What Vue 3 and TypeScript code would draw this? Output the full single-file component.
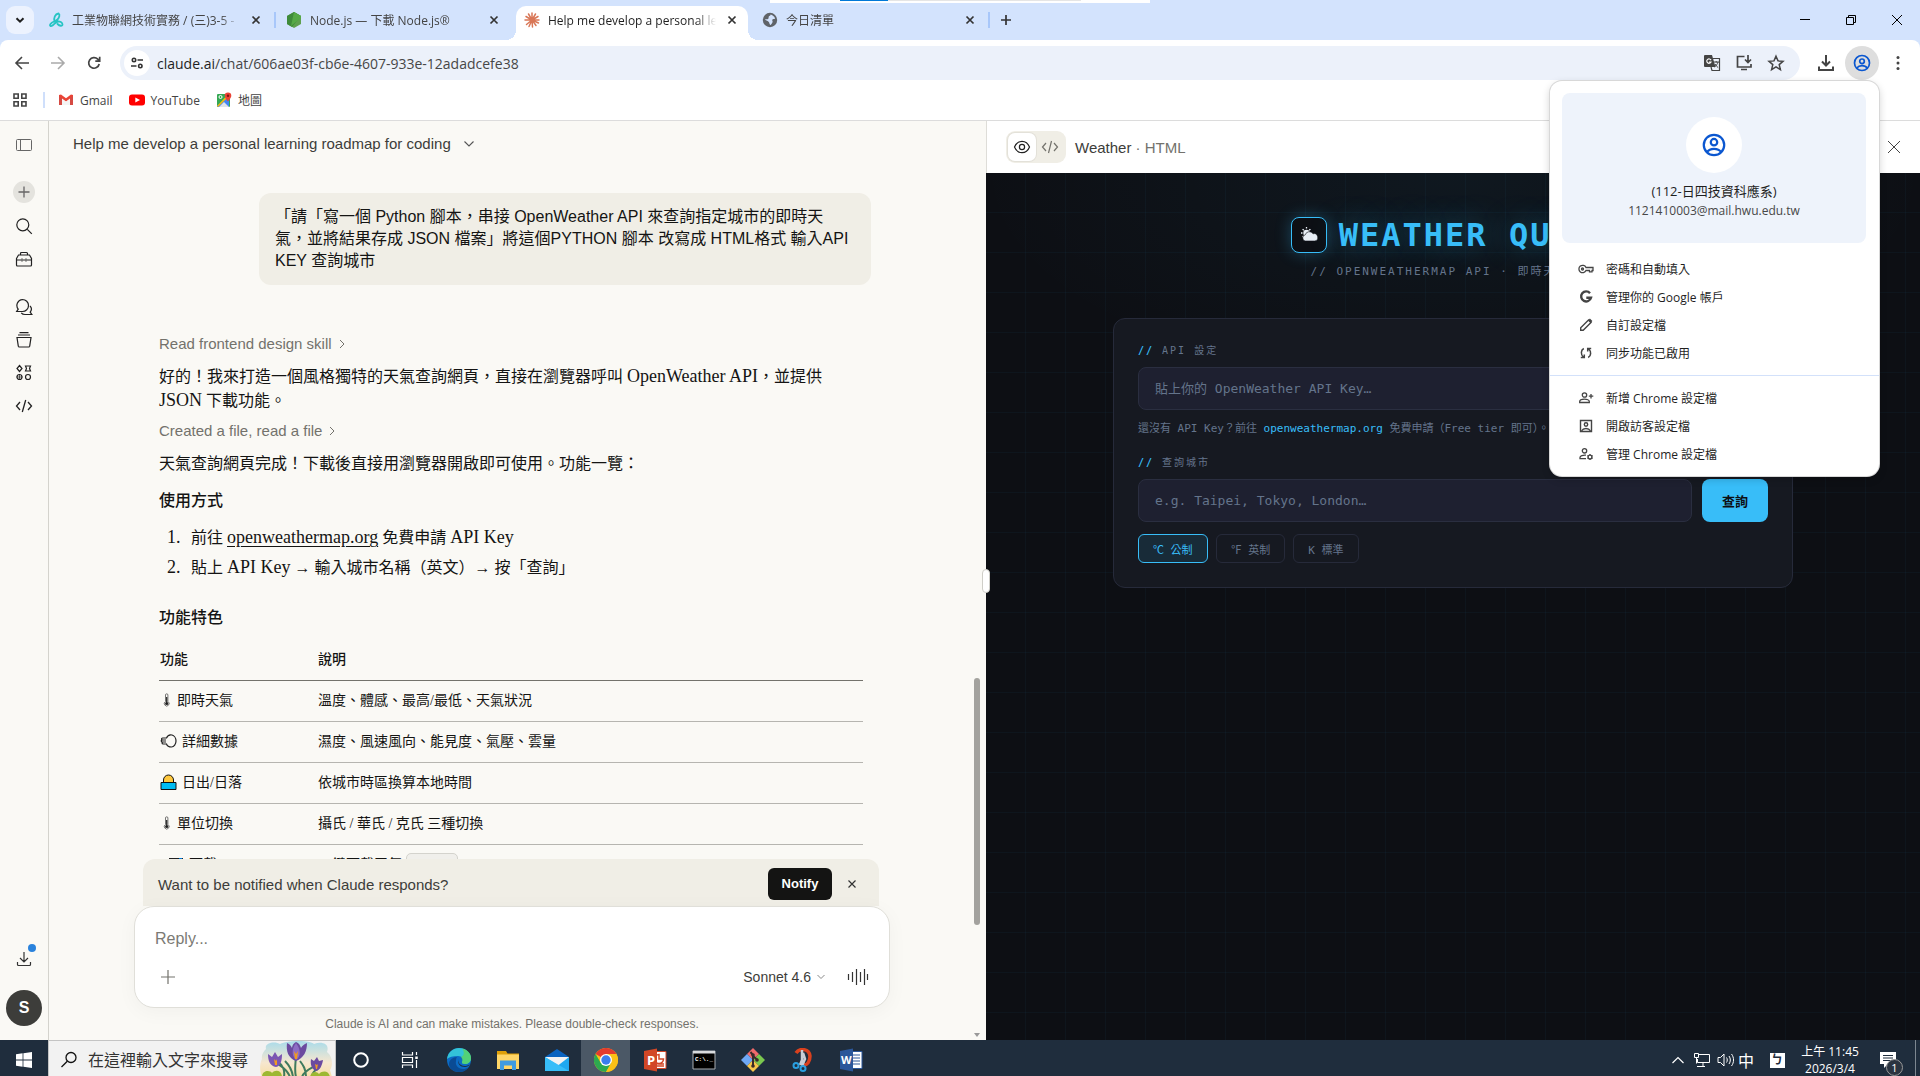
<script setup lang="ts">
import { ref } from 'vue'

interface Tab { title: string; icon: string; active?: boolean; sep?: boolean }
const tabs: Tab[] = [
  { title: '工業物聯網技術實務 / (三)3-5 -', icon: 'course', sep: true },
  { title: 'Node.js — 下載 Node.js®', icon: 'node' },
  { title: 'Help me develop a personal le', icon: 'claude', active: true },
  { title: '今日清單', icon: 'globe', sep: true },
]

interface Row { icon: string; name: string; desc: string; code?: string }
const rows: Row[] = [
  { icon: 'thermo', name: '即時天氣', desc: '溫度、體感、最高/最低、天氣狀況' },
  { icon: 'wind', name: '詳細數據', desc: '濕度、風速風向、能見度、氣壓、雲量' },
  { icon: 'sunrise', name: '日出/日落', desc: '依城市時區換算本地時間' },
  { icon: 'thermo', name: '單位切換', desc: '攝氏 / 華氏 / 克氏 三種切換' },
  { icon: 'disk', name: '下載', desc: '一鍵下載天氣', code: '.json' },
]

const profileItems = [
  { icon: 'key', label: '密碼和自動填入' },
  { icon: 'google', label: '管理你的 Google 帳戶' },
  { icon: 'pencil', label: '自訂設定檔' },
  { icon: 'sync', label: '同步功能已啟用' },
]
const chromeItems = [
  { icon: 'add', label: '新增 Chrome 設定檔' },
  { icon: 'guest', label: '開啟訪客設定檔' },
  { icon: 'manage', label: '管理 Chrome 設定檔' },
]

const units = ['℃ 公制', '℉ 英制', 'K 標準']
const unit = ref(0)
const apiKey = ref('')
const city = ref('')
const reply = ref('')
</script>

<template>
  <div class="screen">
    <header class="browser">
      <div class="tabstrip">
        <button class="tab-search" aria-label="搜尋分頁">
          <svg width="12" height="12" viewBox="0 0 12 12"><path d="M2.500 4.200 6 7.700l3.500-3.500" fill="none" stroke="#1f1f1f" stroke-width="2" /></svg>
        </button>
        <div class="tabs">
          <div v-for="t in tabs" :key="t.title" class="tab" :class="{ active: t.active, sep: t.sep }">
            <svg v-if="t.icon === 'course'" width="16" height="16" viewBox="0 0 16 16" fill="none" stroke="#26c4c4" stroke-width="1.800" stroke-linecap="round"><path d="M10.500 1.500C7 2 5.500 6 6.500 9.500M10.500 1.500c2 1 .5 4.500-1 6S4 10 2.500 12s.500 2.500 2 1.500 3-3.500 5.500-4M9 9.500c3-.5 5.500 1 5.500 3s-3 1.500-5-.5" /></svg>
            <svg v-else-if="t.icon === 'node'" width="16" height="16" viewBox="0 0 16 16"><path d="M8 0l7 4v8l-7 4-7-4V4z" fill="#5fa04e" /><path d="M8 0l7 4-9 11-5-3V4z" fill="#3f8b3a" /><path d="M8 0l7 4v2L5 14z" fill="#56a946" /></svg>
            <svg v-else-if="t.icon === 'claude'" width="16" height="16" viewBox="0 0 16 16" stroke="#d97757" stroke-width="1.500" stroke-linecap="round"><path d="M8 8V1M8 8l3.500-6M8 8l6-3.500M8 8h7M8 8l6.500 3M8 8l4 5.500M8 8l.5 7M8 8l-3 6.500M8 8l-5.500 4.500M8 8H1M8 8 2 4.500M8 8 4.500 2" /></svg>
            <svg v-else width="16" height="16" viewBox="0 0 16 16"><circle cx="8" cy="8" r="7.200" fill="#5f6368" /><path d="M8.500 2.500c2 .5 4 2 4.600 4-1 .8-2.300.3-2.800 1.300s1 1.600 0 2.900c-.7.9-1 2-2 2.300-1-.8-.7-2.200-1.700-3.200S3.300 8.600 3 7.300c1.200 0 2.600.3 3.300-.6s-.1-1.900 1-2.600c.7-.4 1.400-.7 1.200-1.600z" fill="#d3e3fd" /></svg>
            <span class="tab-title">{{ t.title }}</span>
            <button class="tab-close" aria-label="關閉分頁">
              <svg width="10" height="10" viewBox="0 0 10 10"><path d="M1.500 1.500l7 7m0-7l-7 7" stroke="#333" stroke-width="1.700" /></svg>
            </button>
          </div>
          <button class="new-tab" aria-label="新分頁">
            <svg width="12" height="12" viewBox="0 0 12 12"><path d="M6 1v10M1 6h10" stroke="#333" stroke-width="1.700" /></svg>
          </button>
        </div>
        <div class="window-buttons">
          <button aria-label="最小化"><svg width="10" height="10" viewBox="0 0 10 10"><path d="M0 4.500h10" stroke="#000" /></svg></button>
          <button aria-label="還原"><svg width="10" height="10" viewBox="0 0 10 10" fill="none" stroke="#000"><path d="M.5 2.500h7v7h-7zM2.500 2.500v-2h7v7h-2" /></svg></button>
          <button aria-label="關閉"><svg width="10" height="10" viewBox="0 0 10 10"><path d="M0 0l10 10M10 0L0 10" stroke="#000" /></svg></button>
        </div>
        <div class="share-bar"><i></i></div>
      </div>

      <div class="toolbar">
        <div class="nav">
          <button aria-label="上一頁"><svg width="16" height="16" viewBox="0 0 16 16" fill="none" stroke="#444" stroke-width="1.600"><path d="M15 8H2M8 2L2 8l6 6" /></svg></button>
          <button aria-label="下一頁"><svg width="16" height="16" viewBox="0 0 16 16" fill="none" stroke="#aaa" stroke-width="1.600"><path d="M1 8h13M8 2l6 6-6 6" /></svg></button>
          <button aria-label="重新載入"><svg width="16" height="16" viewBox="0 0 16 16" fill="none" stroke="#444" stroke-width="1.700"><path d="M13.200 9a5.300 5.300 0 1 1-1.400-4.800L13.500 6M13.700 1.800v4.400H9.300" /></svg></button>
        </div>
        <div class="omnibox">
          <button class="site-info" aria-label="網站資訊">
            <svg width="14" height="14" viewBox="0 0 14 14" fill="none" stroke="#333" stroke-width="1.600"><circle cx="4" cy="4" r="1.700" /><path d="M7.500 4H13M1 10h5.500" /><circle cx="10.300" cy="10" r="1.700" /></svg>
          </button>
          <span class="url"><b>claude.ai</b>/chat/606ae03f-cb6e-4607-933e-12adadcefe38</span>
          <div class="omni-icons">
            <button aria-label="翻譯"><svg width="18" height="18" viewBox="0 0 18 18"><path d="M2 1h7l3.500 12H2a1 1 0 0 1-1-1V2a1 1 0 0 1 1-1z" fill="#444" /><path d="M8 6.200A2.200 2.200 0 1 0 8 8H6" fill="none" stroke="#fff" stroke-width="1.200" /><path d="M10 4.500h6.500v12H9L8 13" fill="none" stroke="#444" stroke-width="1.200" /><path d="M10.500 8H16M13.200 7v1.500M15 8c-.5 2-2 4-3.500 5M12 10c.8 1.500 2 2.800 3.200 3.600" fill="none" stroke="#444" /></svg></button>
            <button aria-label="安裝"><svg width="18" height="18" viewBox="0 0 18 18" fill="none" stroke="#444" stroke-width="1.700"><path d="M9.500 2.500h-7v10.500h13.500V10M6 15.500h6M13 1v7M10 5.500l3 3 3-3" /></svg></button>
            <button aria-label="加入書籤"><svg width="18" height="18" viewBox="0 0 18 18" fill="none" stroke="#444" stroke-width="1.500"><path d="M9 2.200l2 4.700 5 .4-3.800 3.300 1.200 5L9 12.900l-4.400 2.700 1.200-5L2 7.300l5-.4z" /></svg></button>
          </div>
        </div>
        <div class="actions">
          <button aria-label="下載"><svg width="18" height="18" viewBox="0 0 18 18" fill="none" stroke="#444" stroke-width="2"><path d="M9 1v10M5 7.500l4 4 4-4M2 12.500V16h14v-3.500" /></svg></button>
          <button class="profile" aria-label="個人資料"><svg width="20" height="20" viewBox="0 0 20 20" fill="none" stroke="#0b57d0" stroke-width="1.700"><circle cx="10" cy="10" r="7.500" /><circle cx="10" cy="8.300" r="2.300" /><path d="M4.800 15c1.300-1.700 3-2.400 5.200-2.400s4 .7 5.200 2.400" /></svg></button>
          <button aria-label="更多"><svg width="4" height="16" viewBox="0 0 4 16" fill="#444"><circle cx="2" cy="2.500" r="1.500" /><circle cx="2" cy="8" r="1.500" /><circle cx="2" cy="13.500" r="1.500" /></svg></button>
        </div>
      </div>

      <nav class="bookmarks">
        <button class="apps" aria-label="應用程式"><svg width="14" height="14" viewBox="0 0 14 14" fill="none" stroke="#444" stroke-width="1.600"><path d="M1 1h4.200v4.200H1zM8.800 1H13v4.200H8.800zM1 8.800h4.200V13H1zM8.800 8.800H13V13H8.800z" /></svg></button>
        <a href="#gmail"><svg width="16" height="16" viewBox="0 0 16 16"><path d="M1 3v10h3V6.500L8 9.500l4-3V13h3V3l-2-.5L8 6.200 3 2.500z" fill="#ea4335" /><path d="M1 4v9h3V6.200z" fill="#d54a43" /><path d="M12 6.200V13h3V4z" fill="#d54a43" /><path d="M4 7v6h8V7L8 10z" fill="#f4f4f4" /></svg>Gmail</a>
        <a href="#youtube"><svg width="16" height="16" viewBox="0 0 16 16"><rect y="2.500" width="16" height="11" rx="3" fill="#f00" /><path d="M6.300 5.500v5L11 8z" fill="#fff" /></svg>YouTube</a>
        <a href="#maps"><svg width="16" height="16" viewBox="0 0 16 16"><rect x="1" y="2" width="13" height="13" rx="1" fill="#34a853" /><path d="M1 14L13 3v11a1 1 0 0 1-1 1H2z" fill="#4285f4" /><path d="M3 15l5-5 5 5z" fill="#dfe3e8" /><path d="M1 14L12 2.500l1.500 1L2 15z" fill="#fbbc04" /><circle cx="4.500" cy="5" r="1.500" fill="none" stroke="#fff" /><path d="M12 .5A3.300 3.300 0 0 0 8.700 3.800C8.700 6 12 9.500 12 9.500s3.300-3.500 3.300-5.700A3.300 3.300 0 0 0 12 .5z" fill="#ea4335" /><circle cx="12" cy="3.800" r="1.200" fill="#811411" /></svg>地圖</a>
      </nav>

      <aside class="profile-menu">
        <div class="profile-card">
          <div class="profile-pic"><svg width="28" height="28" viewBox="0 0 20 20" fill="none" stroke="#0b57d0" stroke-width="1.600"><circle cx="10" cy="10" r="7.300" /><circle cx="10" cy="8" r="2.300" /><path d="M4.800 15.200c1.300-1.700 3-2.400 5.200-2.400s4 .7 5.200 2.400" /></svg></div>
          <strong>(112-日四技資科應系)</strong>
          <span>1121410003@mail.hwu.edu.tw</span>
        </div>
        <ul>
          <li v-for="p in profileItems" :key="p.label"><button>
            <svg v-if="p.icon === 'key'" width="16" height="16" viewBox="0 0 16 16" fill="none" stroke="#444" stroke-width="1.300"><path d="M8 6.500h7v3h-1v1.300h-2.500V9.500H8A3.700 3.700 0 1 1 8 6.500z" /><circle cx="4.500" cy="8" r="1" /></svg>
            <svg v-else-if="p.icon === 'google'" width="16" height="16" viewBox="0 0 16 16" fill="none" stroke="#444" stroke-width="2.400"><path d="M12 4.200A5 5 0 1 0 13 8.700H8.300" /></svg>
            <svg v-else-if="p.icon === 'pencil'" width="16" height="16" viewBox="0 0 16 16" fill="none" stroke="#444" stroke-width="1.400"><path d="M2.700 13.300v-2.500l7.800-7.800 2.500 2.500-7.800 7.800z" /><path d="M11 2.500l2.500 2.500" stroke-width="2.500" /></svg>
            <svg v-else width="16" height="16" viewBox="0 0 16 16" fill="none" stroke="#444" stroke-width="1.500"><path d="M5.800 3.500C2.800 5 2.500 9.500 5.300 12M2.800 12.500h3.500V9.500M10.200 12.500c3-1.500 3.300-6 .5-8.500M13.200 3.500H9.700v3" /></svg>
            {{ p.label }}</button></li>
        </ul>
        <hr />
        <ul>
          <li v-for="p in chromeItems" :key="p.label"><button>
            <svg v-if="p.icon === 'add'" width="16" height="16" viewBox="0 0 16 16" fill="none" stroke="#444" stroke-width="1.300"><circle cx="6.500" cy="5" r="2.200" /><path d="M1.700 12.500v-1c0-1.500 2.500-2.400 4.800-2.400s4.800.9 4.800 2.400v1zM13 4v4.500M10.800 6.200h4.500" /></svg>
            <svg v-else-if="p.icon === 'guest'" width="16" height="16" viewBox="0 0 16 16" fill="none" stroke="#444" stroke-width="1.400"><path d="M2.500 2.500h11v11h-11z" /><circle cx="8" cy="6.500" r="1.700" /><path d="M3.500 12.800c2-3 7-3 9 0" /></svg>
            <svg v-else width="16" height="16" viewBox="0 0 16 16" fill="none" stroke="#444" stroke-width="1.300"><circle cx="6.500" cy="4.800" r="2.200" /><path d="M8 9.200c-3-.3-6 .8-6 2.300v1.200h6" /><circle cx="12" cy="11" r="1.900" /><path d="M12 8v1.200M12 12.800V14M9.400 9.500l1 .6M13.600 11.900l1 .6M9.400 12.500l1-.6M13.600 10.100l1-.6" /></svg>
            {{ p.label }}</button></li>
        </ul>
      </aside>
    </header>

    <main class="workspace">
      <nav class="rail">
        <button aria-label="側邊欄"><svg width="18" height="18" viewBox="0 0 18 18" fill="none" stroke="#666"><rect x="1.500" y="3.500" width="15" height="11" rx="1" /><path d="M5.500 3.500v11" /></svg></button>
        <button class="new-chat" aria-label="新對話"><svg width="14" height="14" viewBox="0 0 14 14"><path d="M7 1.500v11M1.500 7h11" stroke="#666" stroke-width="1.300" /></svg></button>
        <button aria-label="搜尋"><svg width="18" height="18" viewBox="0 0 18 18" fill="none" stroke="#222" stroke-width="1.200"><circle cx="7.800" cy="7.800" r="6" /><path d="M12.300 12.300l4.500 4.500" /></svg></button>
        <button aria-label="工具"><svg width="18" height="18" viewBox="0 0 18 18" fill="none" stroke="#222" stroke-width="1.200"><path d="M1.500 8.500 3.500 5h11l2 3.500V15a1 1 0 0 1-1 1h-13a1 1 0 0 1-1-1zM5.500 5V3.500a1 1 0 0 1 1-1h5a1 1 0 0 1 1 1V5M1.500 10H6M8 10h2M12 10h4.500M7 8.500v3M11 8.500v3" /></svg></button>
        <button class="group" aria-label="對話"><svg width="18" height="18" viewBox="0 0 18 18" fill="none" stroke="#222" stroke-width="1.200"><path d="M7.500 1.500a6 6 0 1 1 0 12H1.700l1.500-2.300A6 6 0 0 1 7.500 1.500zM15 8c2 2 1.500 4.500.2 6.200l1.600 2.300H10c-1.800 0-3-.7-3.800-1.700" /></svg></button>
        <button aria-label="專案"><svg width="18" height="18" viewBox="0 0 18 18" fill="none" stroke="#222" stroke-width="1.200"><path d="M2 6.500h14l-1.300 8.700a1 1 0 0 1-1 .8H4.300a1 1 0 0 1-1-.8zM3 4h12M4.500 1.700h9" /></svg></button>
        <button aria-label="成品"><svg width="18" height="18" viewBox="0 0 18 18" fill="none" stroke="#222" stroke-width="1.200"><path d="M4.500 1.500 7 4.500 4.500 7.500 2 4.500zM10.500 2h5l-1 2.500 1 2.500h-5l1-2.500z" /><circle cx="4.500" cy="13" r="2.500" /><circle cx="13" cy="13" r="2.500" /><path d="M4.500 10v6M1.500 13h6" stroke-width=".7" /></svg></button>
        <button aria-label="程式碼"><svg width="18" height="18" viewBox="0 0 18 18" fill="none" stroke="#222" stroke-width="1.300"><path d="M5 5 1.500 9 5 13M13 5l3.500 4-3.500 4M10.700 3 7.300 15" /></svg></button>
        <button class="rail-download" aria-label="下載應用程式"><svg width="16" height="16" viewBox="0 0 16 16" fill="none" stroke="#333" stroke-width="1.200"><path d="M8 1v10M4 7l4 4 4-4M1.500 11v2.500a1 1 0 0 0 1 1h11a1 1 0 0 0 1-1V11" /></svg><i></i></button>
        <button class="avatar">S</button>
      </nav>

      <section class="chat">
        <h1 class="chat-title">Help me develop a personal learning roadmap for coding
          <svg width="12" height="8" viewBox="0 0 12 8"><path d="M1.500 1.500 6 6l4.500-4.500" fill="none" stroke="#555" stroke-width="1.100" /></svg>
        </h1>
        <div class="thread">
          <div class="bubble">「請「寫一個 Python 腳本，串接 OpenWeather API 來查詢指定城市的即時天氣，並將結果存成 JSON 檔案」將這個PYTHON 腳本 改寫成 HTML格式 輸入API KEY 查詢城市</div>
          <article class="answer">
            <button class="step">Read frontend design skill<svg width="8" height="12" viewBox="0 0 8 12"><path d="M2 2l4 4-4 4" fill="none" stroke="#73726c" /></svg></button>
            <p>好的！我來打造一個風格獨特的天氣查詢網頁，直接在瀏覽器呼叫 <span class="latin">OpenWeather API</span>，並提供 <span class="latin">JSON</span> 下載功能。</p>
            <button class="step">Created a file, read a file<svg width="8" height="12" viewBox="0 0 8 12"><path d="M2 2l4 4-4 4" fill="none" stroke="#73726c" /></svg></button>
            <p>天氣查詢網頁完成！下載後直接用瀏覽器開啟即可使用。功能一覽：</p>
            <h2>使用方式</h2>
            <ol>
              <li>前往 <a class="latin" href="#owm">openweathermap.org</a> 免費申請 <span class="latin">API Key</span></li>
              <li>貼上 <span class="latin">API Key</span> → 輸入城市名稱（英文）→ 按「查詢」</li>
            </ol>
            <h2>功能特色</h2>
            <table>
              <thead><tr><th>功能</th><th>說明</th></tr></thead>
              <tbody>
                <tr v-for="r in rows" :key="r.name">
                  <td>
                    <svg v-if="r.icon === 'thermo'" width="14" height="16" viewBox="0 0 14 16"><path d="M5.500 3a1.200 1.200 0 0 1 2.400 0v6.500a2.400 2.400 0 1 1-2.400 0z" fill="none" stroke="#555" stroke-width=".8" /><circle cx="6.700" cy="11.500" r="1.600" fill="#222" /><path d="M6.700 5v6" stroke="#222" stroke-width="1.200" /></svg>
                    <svg v-else-if="r.icon === 'wind'" class="wide" width="17" height="16" viewBox="0 0 17 16" fill="none" stroke="#222" stroke-width="1.200"><path d="M6.500 5C7.500 2.500 10 1.500 12 2s4 3 4 6-2 6-4.500 6-4.500-1.500-5-3M7 5H2.500c-1.300 0-1.300 2 0 2H6M2.500 7C.8 7 .8 9 2.500 9H6M3 9c-1.300 0-1.300 2 .2 2H7" /></svg>
                    <svg v-else-if="r.icon === 'sunrise'" class="wide" width="17" height="16" viewBox="0 0 17 16" stroke="#111"><path d="M3.500 10V6a5 5 0 0 1 10 0v4z" fill="#ffc83d" /><path d="M1 8.500h15v7H1z" fill="#00bcf2" /></svg>
                    <svg v-else class="wide disk" width="16" height="14" viewBox="0 0 16 14"><path d="M1 0h14v14H1z" fill="#222" /><path d="M11 0h3v3h-3z" fill="#0078d7" /></svg>{{ r.name }}
                  </td>
                  <td>{{ r.desc }} <code v-if="r.code">{{ r.code }}</code></td>
                </tr>
              </tbody>
            </table>
          </article>
        </div>
        <div class="dock">
          <div class="notify">
            <span>Want to be notified when Claude responds?</span>
            <button class="notify-btn">Notify</button>
            <button class="notify-close" aria-label="關閉"><svg width="8" height="8" viewBox="0 0 8 8"><path d="M.5.5l7 7m0-7l-7 7" stroke="#333" stroke-width="1.200" /></svg></button>
          </div>
          <form class="composer" @submit.prevent>
            <input v-model="reply" type="text" placeholder="Reply..." aria-label="Reply" />
            <div class="composer-bar">
              <button type="button" aria-label="附加"><svg width="14" height="14" viewBox="0 0 14 14"><path d="M7 0v14M0 7h14" stroke="#73726c" stroke-width="1.200" /></svg></button>
              <button type="button" class="model">Sonnet 4.6<svg width="8" height="6" viewBox="0 0 8 6"><path d="M.5 1 4 4.500 7.500 1" fill="none" stroke="#888" /></svg></button>
              <button type="button" class="voice" aria-label="語音"><svg width="22" height="18" viewBox="0 0 22 18"><path d="M1.500 6v6M5.500 4v10M9.500 1v16M13.500 4v10M17.500 1v16M20.500 6v6" stroke="#333" stroke-width="1.200" /></svg></button>
            </div>
          </form>
          <p class="note">Claude is AI and can make mistakes. Please double-check responses.</p>
        </div>
        <div class="scrollbar"><i></i><svg width="6" height="4" viewBox="0 0 6 4"><path d="M0 0h6L3 4z" fill="#999" /></svg></div>
      </section>

      <section class="artifact">
        <header class="artifact-head">
          <div class="toggle">
            <button class="on" aria-label="預覽"><svg width="18" height="18" viewBox="0 0 18 18" fill="none" stroke="#222" stroke-width="1.200"><path d="M1.500 9C3 5.300 5.800 3.300 9 3.300s6 2 7.500 5.700c-1.500 3.700-4.300 5.700-7.500 5.700S3 12.700 1.500 9z" /><circle cx="9" cy="9" r="2.600" /></svg></button>
            <button aria-label="程式碼"><svg width="18" height="18" viewBox="0 0 18 18" fill="none" stroke="#73726c" stroke-width="1.200"><path d="M5 5 1.500 9 5 13M13 5l3.500 4-3.500 4M10.500 3 7.500 15" /></svg></button>
          </div>
          <span class="artifact-title">Weather <em>· HTML</em></span>
          <button class="artifact-close" aria-label="關閉"><svg width="12" height="12" viewBox="0 0 12 12"><path d="M0 0l12 12M12 0L0 12" stroke="#444" /></svg></button>
        </header>
        <div class="weather">
          <div class="brand">
            <div class="logo"><svg width="20" height="20" viewBox="0 0 20 20"><circle cx="7.500" cy="8" r="3.200" fill="#e8eef6" /><path d="M7.500 2v1.600M2 8h1.500M3.600 4.100l1.200 1.200M11.400 4.100l-1.200 1.200M3.600 12l1-1" stroke="#e8eef6" stroke-width="1.300" /><path d="M6 16a3.200 3.200 0 0 1 .3-6.200A4.200 4.200 0 0 1 14 8.800 3.600 3.600 0 0 1 16 16z" fill="#e8eef6" stroke="#0d0f14" stroke-width=".6" /></svg></div>
            <h2>WEATHER QUERY</h2>
          </div>
          <p class="tagline">// OPENWEATHERMAP API · 即時天氣查詢</p>
          <div class="card">
            <label for="key"><b>//</b> API 設定</label>
            <input id="key" v-model="apiKey" type="text" placeholder="貼上你的 OpenWeather API Key…" />
            <p class="hint">還沒有 API Key？前往 <a href="#owm">openweathermap.org</a> 免費申請（Free tier 即可）。</p>
            <label for="city"><b>//</b> 查詢城市</label>
            <div class="city-row">
              <input id="city" v-model="city" type="text" placeholder="e.g. Taipei, Tokyo, London…" />
              <button class="go">查詢</button>
            </div>
            <div class="units">
              <button v-for="(u, i) in units" :key="u" :class="{ on: unit === i }" @click="unit = i">{{ u }}</button>
            </div>
          </div>
        </div>
        <div class="grip"></div>
      </section>
    </main>

    <footer class="taskbar">
      <button class="start" aria-label="開始"><svg width="16" height="16" viewBox="0 0 16 16" fill="#fff"><path d="M0 2.200 6.600 1.300v6.300H0zM7.400 1.200 16 0v7.600H7.400zM0 8.400h6.600v6.300L0 13.800zM7.400 8.400H16V16l-8.600-1.200z" /></svg></button>
      <label class="search">
        <svg width="18" height="18" viewBox="0 0 18 18" fill="none" stroke="#111" stroke-width="1.300"><circle cx="11" cy="6.500" r="5" /><path d="M7.300 10.200 1.500 16" /></svg>
        <input type="text" placeholder="在這裡輸入文字來搜尋" />
        <svg class="crocus" width="72" height="36" viewBox="0 0 72 36">
          <defs><linearGradient id="sky" x1="0" y1="0" x2="0" y2="1"><stop offset="0" stop-color="#a9dbea" /><stop offset=".6" stop-color="#f6e7cf" /><stop offset="1" stop-color="#f8dfa6" /></linearGradient></defs>
          <path d="M6 8C4 1 16 0 20 3 28-1 50-1 54 3c8-3 16 0 13 8 6 5 6 13 3 18l2 7H2C-1 28 0 22 2 18c-1-4 2-8 4-10z" fill="url(#sky)" />
          <g fill="none" stroke="#3f7a5e" stroke-width="2"><path d="M36 36C34 28 36 20 36 14M30 36c-3-8-8-10-12-13M42 36c2-6 8-8 13-11M24 36c1-6-1-12-5-14M46 36c0-8-3-12-6-16M33 36c-1-8-6-14-8-16M52 36c0-4 3-7 6-8" /></g>
          <path d="M2 36c0-7 8-7 10-4 3-4 10-3 10 4zM50 36c1-6 7-6 9-3 4-4 10-3 11 3z" fill="#9db832" />
          <path d="M36 20c-8-3-10-10-9-18 3 1 4 3 5 5 0-3 2-5 4-6 3 1 4 3 5 6 1-2 3-4 6-5 0 8-3 15-11 18z" fill="#6b4aa0" /><path d="M36 19c-4-4-5-10 0-17 5 7 5 13 0 17z" fill="#8d6cc4" /><path d="M35 18l-1-8 2 3 2-3-1 8z" fill="#f39a1e" />
          <path d="M16 26c-6-1-8-6-8-13l4 3 3-5 3 5 4-3c0 6-1 12-6 13z" fill="#7a55b2" /><path d="M15 24l-1-6 2 2 1-2v6z" fill="#f39a1e" />
          <path d="M56 30c-4-2-6-6-5-12l3 2 3-4 2 4 4-1c-1 6-3 10-7 11z" fill="#6b4aa0" /><path d="M56 28l-1-5 2 1 1-1-1 5z" fill="#f39a1e" />
        </svg>
      </label>
      <div class="apps-row">
        <button aria-label="Cortana"><svg width="24" height="24" viewBox="0 0 24 24"><circle cx="12" cy="12" r="6.800" fill="none" stroke="#fff" stroke-width="2" /></svg></button>
        <button aria-label="工作檢視"><svg width="24" height="24" viewBox="0 0 24 24" fill="none" stroke="#fff" stroke-width="1.200"><path d="M4.500 4v3h10V4M4.500 20v-3h10v3M4.500 9.500h10v5h-10zM18.500 4v3M18.500 12v8" /><path d="M18.500 8.500v2.500" stroke-width="2.500" /></svg></button>
        <button aria-label="Edge"><svg width="24" height="24" viewBox="0 0 24 24"><circle cx="12" cy="12" r="12" fill="#0c6bc4" /><path d="M0 11C1 4 6 0 12 0c7 0 12 5 12 10 0 4-3 6-6 6-2 0-3.500-1-3-2 2-3 0-6-4-6C6 8 2 9 0 11z" fill="#33c3d8" /><path d="M15 .5C21 2 24 6 24 10c0 4-3 6-6 6-2 0-3.500-1-3-2 1-2 0-4-1-5 3-1 4-5 1-8.500z" fill="#5ad45f" opacity=".8" /><path d="M9 13c-1 4 2 8 7 8 2 0 4-.5 6-2-2 3-6 5-10 5C6 24 2 20 2 16c0-4 4-7 8-7-1 1-1 3-1 4z" fill="#0a4b94" /><path d="M11.500 11c-1 3 1.500 7 6 7 2 0 4-.6 5.500-1.500-1 1.500-3 2.500-5 2.500-5 0-8-3.500-6.500-8z" fill="#1f2d3d" /></svg></button>
        <button aria-label="檔案總管"><svg width="24" height="24" viewBox="0 0 24 24"><path d="M1 3h9l1.500 2.500H23V21H1z" fill="#dfa008" /><path d="M1 6.500h22V21H1z" fill="#ffd667" /><path d="M4 12.500h16V22h-4v-4.500H8V22H4z" fill="#3f9be0" /></svg></button>
        <button aria-label="郵件"><svg width="24" height="24" viewBox="0 0 24 24"><path d="M0 9 12 1l12 8z" fill="#0a63c0" /><path d="M0 9h24v14H0z" fill="#1fa8f0" /><path d="M0 9h24L13 17.500z" fill="#f2f2f2" /><path d="M0 9l24 14H0z" fill="#37bdf8" /></svg></button>
        <button class="current" aria-label="Chrome"><svg width="24" height="24" viewBox="0 0 24 24"><circle cx="12" cy="12" r="12" fill="#fbc116" /><path d="M12 12 1.600 6A12 12 0 0 1 22.400 6H12z" fill="#e33b2e" /><path d="M1.600 6A12 12 0 0 0 12 24l5.200-9L12 12 6.800 15z" fill="#2da94f" /><path d="M12 6h10.400A12 12 0 0 1 12 24l5.200-9z" fill="#fbc116" /><circle cx="12" cy="12" r="6" fill="#fff" /><circle cx="12" cy="12" r="4.700" fill="#3b7ded" /></svg></button>
        <button aria-label="PowerPoint"><svg width="24" height="24" viewBox="0 0 24 24"><path d="M12 3.500h11v17H12z" fill="#fff" stroke="#d24726" /><path d="M16 6.500v4.500h4.500A4.500 4.500 0 1 1 16 6.500zM14 16h7M14 18h7" fill="none" stroke="#d24726" stroke-width="1.500" /><path d="M1 3l13-2.500v23L1 21z" fill="#d24726" /><text x="4" y="16.500" font-size="13" font-weight="700" fill="#fff" font-family="Open Sans, sans-serif">P</text></svg></button>
        <button aria-label="命令提示字元"><svg width="24" height="24" viewBox="0 0 24 24"><path d="M1 3h22v18H1z" fill="#000" stroke="#a8adb2" /><path d="M1 3h22v2.500H1z" fill="#d8dbde" /><text x="3" y="12.500" font-size="6" font-weight="700" fill="#fff" font-family="Liberation Mono, monospace">C:\._</text></svg></button>
        <button aria-label="Git"><svg width="24" height="24" viewBox="0 0 24 24"><path d="M12 0l6 6-6 6-6-6z" fill="#f06a6a" /><path d="M6 6l6 6-6 6-6-6z" fill="#6fa8f5" /><path d="M18 6l6 6-6 6-6-6z" fill="#7ac74f" /><path d="M12 12l6 6-6 6-6-6z" fill="#f7c64b" /><path d="M9.500 4 12 7v11M12 8l4 3.500" fill="none" stroke="#3a2a2a" stroke-width="2" /><circle cx="12" cy="7" r="1.800" fill="#3a2a2a" /><circle cx="16" cy="12" r="1.800" fill="#3a2a2a" /><circle cx="12" cy="18" r="1.800" fill="#3a2a2a" /></svg></button>
        <button aria-label="剪取工具"><svg width="24" height="24" viewBox="0 0 24 24"><path d="M6 5c3-5 13-5 14 3 0 6-3 9-6 9" fill="none" stroke="#d9411e" stroke-width="3.500" /><path d="M12 2v10l-2 5M13 5l2 6-3 7" fill="none" stroke="#c8ced6" stroke-width="2.500" /><circle cx="6" cy="17.500" r="2.500" fill="none" stroke="#2a9fe0" stroke-width="2" /><circle cx="13" cy="20.500" r="2.500" fill="none" stroke="#2a9fe0" stroke-width="2" /></svg></button>
        <button aria-label="Word"><svg width="24" height="24" viewBox="0 0 24 24"><path d="M12 3.500h11v17H12z" fill="#fff" stroke="#2b579a" /><path d="M14 7h7M14 10h7M14 13h7M14 16h7" stroke="#2b579a" stroke-width="1.200" /><path d="M1 3l13-2.500v23L1 21z" fill="#2b579a" /><text x="2" y="16" font-size="11" font-weight="700" fill="#fff" font-family="Open Sans, sans-serif">W</text></svg></button>
      </div>
      <div class="tray">
        <button aria-label="顯示隱藏的圖示"><svg width="12" height="8" viewBox="0 0 12 8"><path d="M.5 7 6 1.500 11.500 7" fill="none" stroke="#fff" stroke-width="1.200" /></svg></button>
        <button aria-label="網路"><svg width="18" height="16" viewBox="0 0 18 16" fill="none" stroke="#fff"><path d="M5.500 2.500h11v8h-12V7M1.500 1.500h4v4h-4zM3.500 5.500v6M4 14.500h8M10 10.500v4" /></svg></button>
        <button aria-label="音量"><svg width="18" height="16" viewBox="0 0 18 16" fill="none" stroke="#fff"><path d="M1 5.500h2.500L7 2v12l-3.500-3.500H1zM9.500 5.500c1 1.500 1 3.500 0 5M12 4c1.800 2.500 1.800 5.500 0 8M14.500 2c2.700 3.500 2.700 8.500 0 12" /></svg></button>
        <button class="lang">中</button>
        <button class="ime" aria-label="輸入法"><span>ㄅ</span></button>
        <time><span>上午 11:45</span><span>2026/3/4</span></time>
        <button class="action-center" aria-label="通知"><svg width="18" height="16" viewBox="0 0 18 16"><path d="M1 0h16v12H9l-4 4v-4H1z" fill="#fff" /><path d="M4 3.500h10M4 6h10M4 8.500h10" stroke="#1f2d3d" stroke-width="1.200" /></svg><i>1</i></button>
        <span class="peek"></span>
      </div>
    </footer>
  </div>
</template>

<style>
body { margin: 0; overflow: hidden; }
</style>

<style scoped>
* { box-sizing: border-box; }
button { border: 0; padding: 0; background: none; color: inherit; font: inherit; display: flex; align-items: center; justify-content: center; flex: none; cursor: pointer; }
input { font: inherit; color: inherit; border: 0; outline: 0; background: none; min-width: 0; }
p, h1, h2, ul, ol { margin: 0; padding: 0; }
ul { list-style: none; }
svg { flex: none; display: block; }

.screen { height: 100vh; display: flex; flex-direction: column; font-family: "Open Sans", "Noto Sans CJK TC", sans-serif; font-size: 12px; color: #1f1f1f; }

/* browser frame */
.browser { position: relative; flex: none; z-index: 2; background: #d3e3fd; border-bottom: 1px solid #dcdcdc; }
.tabstrip { position: relative; height: 40px; display: flex; align-items: flex-start; padding: 6px 0 0 6px; }
.tab-search { width: 28px; height: 28px; border-radius: 9px; background: #ecf2fe; }
.tabs { display: flex; flex: 1; min-width: 0; margin-left: 6px; }
.tab { position: relative; width: 232px; height: 34px; margin-right: 6px; padding: 0 8px 6px; display: flex; align-items: center; border-radius: 10px 10px 0 0; color: #444; }
.tab.active { background: #fff; color: #1f1f1f; }
.tab.active::before, .tab.active::after { content: ""; position: absolute; bottom: 0; width: 10px; height: 10px; }
.tab.active::before { left: -10px; background: radial-gradient(circle at 0 0, transparent 10px, #fff 10px); }
.tab.active::after { right: -10px; background: radial-gradient(circle at 100% 0, transparent 10px, #fff 10px); }
.tab.sep::after { content: ""; position: absolute; right: -4px; top: 6px; width: 2px; height: 16px; background: #a8c7fa; }
.tab-title { flex: 1; margin: 0 8px; overflow: hidden; white-space: nowrap; -webkit-mask-image: linear-gradient(to right, #000 calc(100% - 20px), transparent); mask-image: linear-gradient(to right, #000 calc(100% - 20px), transparent); }
.tab-close { width: 16px; height: 16px; }
.new-tab { width: 28px; height: 28px; }
.window-buttons { display: flex; }
.window-buttons button { width: 46px; height: 28px; }
.share-bar { position: absolute; left: 770px; top: 0; width: 380px; height: 3px; background: #fff; padding-left: 70px; }
.share-bar i { display: block; width: 241px; height: 1px; background: linear-gradient(to right, #0078d7 48px, #e5e5e5 48px); }

.toolbar { height: 46px; display: flex; align-items: center; background: #fff; border-radius: 8px 8px 0 0; padding: 0 12px 0 8px; }
.nav { display: flex; }
.nav button { width: 28px; height: 28px; margin-right: 8px; }
.omnibox { flex: 1; height: 34px; display: flex; align-items: center; margin: 0 16px 0 4px; padding: 0 14px 0 4px; border-radius: 17px; background: #ecf1fa; }
.site-info { width: 26px; height: 26px; border-radius: 50%; background: #fff; }
.url { flex: 1; padding-left: 7px; font-size: 14px; color: #474747; }
.url b { font-weight: 400; color: #1f1f1f; }
.omni-icons { display: flex; gap: 14px; margin-right: 1px; }
.actions { display: flex; align-items: center; gap: 9px; }
.actions button { width: 20px; height: 34px; }
.actions .profile { width: 34px; border-radius: 50%; background: #dedede; }
.bookmarks { height: 34px; display: flex; align-items: center; padding: 0 0 6px 13px; background: #fff; color: #444; }
.apps { padding-right: 16px; height: 16px; border-right: 2px solid #cfdffb; }
.bookmarks a { display: flex; align-items: center; gap: 6px; color: inherit; text-decoration: none; margin-left: 16px; }
.bookmarks .apps + a { margin-left: 13px; }

.profile-menu { position: absolute; right: 41px; top: 81px; width: 329px; padding: 12px 0 8px; border-radius: 12px; background: #fff; box-shadow: 0 0 0 1px #d8d8d8, 0 3px 8px rgba(0, 0, 0, .2); }
.profile-card { margin: 0 13px 12px 12px; height: 150px; padding-top: 24px; border-radius: 8px; background: #eef3fb; display: flex; flex-direction: column; align-items: center; }
.profile-pic { width: 56px; height: 56px; border-radius: 50%; background: #fff; display: flex; align-items: center; justify-content: center; margin-bottom: 9px; }
.profile-card strong { font-weight: 400; font-size: 13px; line-height: 19px; }
.profile-card span { font-size: 12px; line-height: 19px; color: #474747; }
.profile-menu button { height: 28px; padding-left: 28px; gap: 12px; }
.profile-menu hr { border: 0; border-top: 1px solid #d3e1fa; margin: 8px 0; }

/* workspace */
.workspace { flex: 1; min-height: 0; display: grid; grid-template-columns: 49px minmax(0, 937fr) minmax(0, 934fr); grid-template-rows: minmax(0, 1fr); font-family: "Liberation Sans", "Noto Sans CJK TC", sans-serif; }
.rail { display: flex; flex-direction: column; align-items: center; padding: 7px 0 14px; border-right: 1px solid #d4d3cd; background: #faf9f5; }
.rail button { height: 33px; width: 36px; }
.rail .new-chat { width: 22px; height: 22px; border-radius: 50%; background: #e4e3de; margin: 20px 0 6px; }
.rail .group { margin-top: 15px; }
.rail .rail-download { position: relative; margin-top: auto; margin-bottom: 15px; }
.rail-download i { position: absolute; right: 6px; top: 2px; width: 8px; height: 8px; border-radius: 50%; background: #2a82dc; }
.rail .avatar { height: 36px; border-radius: 50%; background: #3d3d3a; color: #fff; font-weight: 700; font-size: 16px; }

.chat { position: relative; display: flex; flex-direction: column; padding-right: 11px; background: #faf9f5; color: #141413; }
.chat-title { height: 48px; display: flex; align-items: center; gap: 12px; padding: 0 0 3px 24px; font-size: 15px; font-weight: 400; color: #3d3d3a; }
.thread { flex: 1; min-height: 0; overflow: hidden; width: 756px; max-width: 100%; margin: 0 auto; padding: 24px 19px 0 25px; }
.bubble { width: 612px; max-width: 100%; margin-left: auto; padding: 13px 16px; border-radius: 12px; background: #f0eee6; font-size: 16px; line-height: 22px; }
.answer { padding: 49px 8px 0 0; font-family: "Liberation Serif", "Noto Sans CJK TC", serif; font-size: 16px; line-height: 24px; }
.step { height: 20px; gap: 6px; font: 15px/20px "Liberation Sans", sans-serif; color: #73726c; }
.answer p { margin: 11px 0 8px; }
.answer h2 { font-size: 16px; line-height: 24px; font-weight: 500; margin-top: 13px; }
.latin { font-size: 18px; line-height: 20px; color: inherit; }
a.latin { text-underline-offset: 3px; text-decoration-thickness: 1px; }
.answer ol { padding-left: 26px; margin: 12px 0 26px; }
.answer li { margin-bottom: 5px; padding-left: 6px; }
.answer li::marker { font-size: 18px; }
table { width: 100%; margin-top: 10px; border-collapse: collapse; font-size: 14px; line-height: 20px; table-layout: fixed; }
th { text-align: left; font-weight: 500; height: 40px; padding: 0 0 0 1px; border-bottom: 1px solid #73726c; }
td { height: 41px; padding: 0 0 0 1px; border-bottom: 1px solid #b6b5b0; }
th:first-child { width: 158px; }
td svg { display: inline-block; vertical-align: -3px; margin-right: 3px; }
td svg.wide { margin-right: 5px; }
td svg.disk { margin-left: 8px; }
code { display: inline-block; padding: 0 7px; border: 1px solid #d4d3cd; border-radius: 5px; background: #f0efeb; font: 12px/22px "DejaVu Sans Mono", monospace; color: #8a2424; }

.dock { width: 756px; max-width: 100%; margin: 0 auto; }
.notify { height: 47px; margin: 0 11px 0 9px; padding: 3px 23px 0 15px; display: flex; align-items: center; border-radius: 12px 12px 0 0; background: #f0eee6; font-size: 15px; color: #3d3d3a; }
.notify span { flex: 1; }
.notify-btn { width: 64px; height: 32px; border-radius: 6px; background: #141413; color: #fff; font-size: 13px; font-weight: 700; margin-right: 16px; padding-bottom: 2px; }
.composer { height: 102px; padding: 19px 20px 0; border-radius: 20px; background: #fff; border: 1px solid #e0dfd9; box-shadow: 0 4px 20px rgba(0, 0, 0, .04); font-size: 14px; color: #3d3d3a; }
.composer input { width: 100%; height: 26px; padding: 0; font-size: 16px; }
.composer input::placeholder { color: #7b7a74; opacity: 1; }
.composer-bar { display: flex; align-items: center; margin-top: 9px; height: 32px; }
.composer-bar button:first-child { margin: 0 auto 0 6px; }
.model { gap: 6px; }
.voice { margin-left: 22px; }
.note { height: 32px; line-height: 32px; text-align: center; font-size: 12px; color: #73726c; }
.scrollbar { position: absolute; right: 6px; top: 0; bottom: 0; width: 6px; display: flex; flex-direction: column; justify-content: flex-end; gap: 108px; padding-bottom: 3px; }
.scrollbar i { height: 247px; border-radius: 3px; background: #a3a29e; }

/* artifact pane */
.artifact { position: relative; display: flex; flex-direction: column; }
.artifact-head { height: 52px; flex: none; display: flex; align-items: center; padding: 0 20px 0 19px; background: #fff; border-left: 1px solid #deddd8; }
.toggle { display: flex; padding: 2px; width: 60px; height: 32px; border-radius: 9px; background: #f0eee6; }
.toggle button { width: 28px; height: 28px; border-radius: 7px; }
.toggle .on { background: #fff; box-shadow: 0 0 0 1px #e3e1d9; }
.artifact-title { flex: 1; padding-left: 9px; font-size: 15px; color: #3d3d3a; }
.artifact-title em { font-style: normal; color: #73726c; }
.weather { flex: 1; min-height: 0; padding: 41px 24px; overflow: hidden; font-family: "DejaVu Sans Mono", "Noto Sans CJK TC", monospace; color: #64748b;
  background-color: #0d0f14;
  background-image: radial-gradient(ellipse 480px 220px at 50% 0, rgba(56, 189, 248, .05), transparent), linear-gradient(to left, rgba(56, 189, 248, .04) 1px, transparent 1px), linear-gradient(to top, rgba(56, 189, 248, .04) 1px, transparent 1px);
  background-size: 100% 100%, 40px 40px, 40px 40px; }
.brand { display: flex; align-items: center; justify-content: center; gap: 12px; height: 42px; }
.logo { width: 36px; height: 36px; border: 1px solid #38bdf8; border-radius: 8px; background: #0d0f14; display: flex; align-items: center; justify-content: center; box-shadow: 0 0 16px rgba(56, 189, 248, .3); }
.brand h2 { font-size: 32px; line-height: 42px; letter-spacing: 2px; color: #38bdf8; text-shadow: 0 0 30px rgba(56, 189, 248, .4); white-space: nowrap; }
.tagline { margin: 7px 0 38px; text-align: center; font-size: 11px; line-height: 17px; letter-spacing: 2px; }
.card { width: 680px; max-width: 100%; margin: 0 auto; padding: 24px; border: 1px solid #262a3a; border-radius: 12px; background: #161921; }
.card label { display: block; height: 16px; line-height: 16px; font-size: 10px; letter-spacing: 2px; margin-bottom: 8px; }
.card label b { color: #38bdf8; }
.card input { width: 100%; height: 43px; padding: 0 16px; border: 1px solid #2a2e40; border-radius: 8px; background: #1e2030; font-size: 13px; display: block; }
.card input::placeholder { color: #64748b; opacity: 1; }
.hint { height: 17px; line-height: 17px; margin: 10px 0 18px; font-size: 11px; }
.hint a { color: #38bdf8; text-decoration: none; }
.city-row { display: flex; gap: 10px; }
.go { width: 66px; height: 43px; border-radius: 8px; background: #38bdf8; color: #0d0f14; font-size: 13px; font-weight: 700; }
.units { display: flex; gap: 8px; margin-top: 12px; }
.units button { height: 29px; padding: 0 14px; border: 1px solid #262a3a; border-radius: 6px; font-size: 11px; }
.units .on { border-color: #38bdf8; background: #182b38; color: #38bdf8; }
.grip { position: absolute; left: -4px; top: 448px; width: 8px; height: 24px; border-radius: 4px; background: #fff; border: 1px solid #cfcec8; }

/* taskbar */
.taskbar { height: 36px; flex: none; display: flex; align-items: flex-start; overflow: hidden; background: #1f2d3d; color: #fff; }
.taskbar button { height: 40px; }
.start { width: 48px; }
.search { width: 288px; height: 40px; display: flex; align-items: center; padding-left: 11px; background: #f2f2f2; border: 1px solid #c4c4c4; color: #333; }
.search input { flex: 1; padding: 0 0 0 10px; font-size: 16px; }
.search input::placeholder { color: #333; opacity: 1; }
.crocus { margin: 0 3px 2px 0; }
.apps-row { display: flex; flex: 1; }
.apps-row button { width: 49px; }
.apps-row .current { background: #4b5866; }
.tray { display: flex; align-items: center; height: 40px; }
.tray button { width: 24px; }
.tray .lang { font-size: 16px; width: 16px; }
.tray .ime { width: 46px; }
.ime span { width: 15px; height: 15px; background: #fff; color: #1f2d3d; font-size: 12px; line-height: 14px; font-weight: 700; }
.tray time { width: 60px; text-align: center; line-height: 17px; display: flex; flex-direction: column; white-space: nowrap; }
.tray .action-center { position: relative; width: 55px; }
.action-center i { position: absolute; right: 12px; top: 19px; width: 17px; height: 17px; border: 1px solid #999; border-radius: 50%; background: #2b3440; font: 11px/15px "Open Sans", sans-serif; }
.peek { width: 5px; height: 40px; border-left: 1px solid #7d8791; }
</style>
